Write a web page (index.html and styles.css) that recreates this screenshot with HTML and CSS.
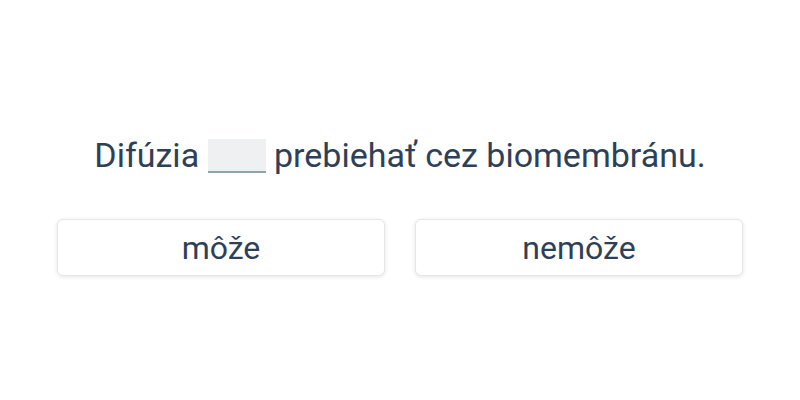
FILE: index.html
```html
<!DOCTYPE html>
<html lang="sk">
<head>
<meta charset="utf-8">
<link rel="stylesheet" href="styles.css">
</head>
<body>
<main class="quiz">
  <p class="sentence">Difúzia <span class="blank"></span> prebiehať cez biomembránu.</p>
  <div class="options">
    <button class="option">môže</button>
    <button class="option">nemôže</button>
  </div>
</main>
</body>
</html>
```
FILE: styles.css
```css
html, body {
  margin: 0;
  padding: 0;
  height: 100%;
  background: #ffffff;
}
body {
  box-sizing: border-box;
  padding-top: 11px;
  font-family: Roboto, "Noto Sans", sans-serif;
  color: #2c3e50;
  display: flex;
  align-items: center;
  justify-content: center;
}
.quiz {
  width: 686px;
  display: flex;
  flex-direction: column;
  align-items: stretch;
  gap: 44px;
}
.sentence {
  margin: 0;
  text-align: center;
  font-size: 34px;
  line-height: 40px;
  color: #2e4057;
}
.blank {
  display: inline-block;
  width: 58px;
  height: 32px;
  vertical-align: -6px;
  background: #eef0f2;
  border-bottom: 2px solid #8ea4a6;
}
.options {
  display: grid;
  grid-template-columns: 1fr 1fr;
  gap: 30px;
}
.option {
  height: 57px;
  background: #ffffff;
  border: 1px solid #e6e6e6;
  border-radius: 6px;
  box-shadow: 0 1px 4px rgba(0,0,0,0.10);
  font-family: Roboto, "Noto Sans", sans-serif;
  font-size: 32px;
  color: #2e4057;
  padding: 0;
}
```
